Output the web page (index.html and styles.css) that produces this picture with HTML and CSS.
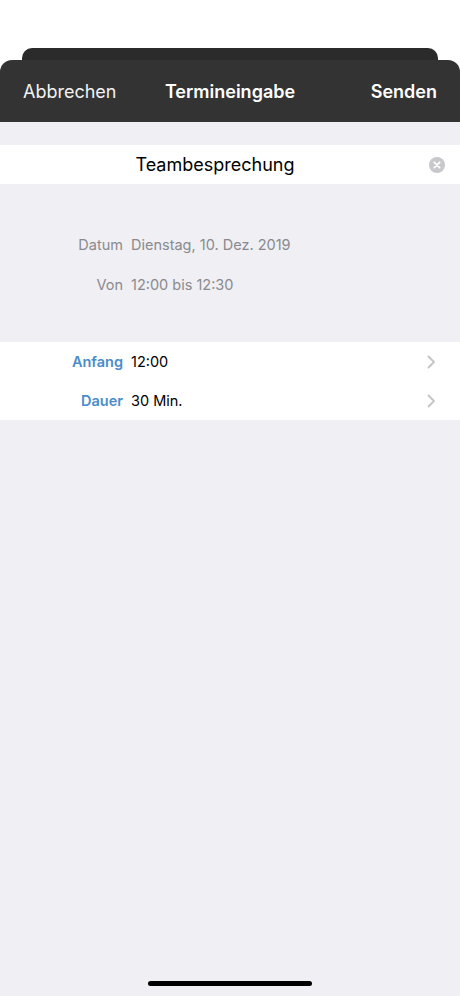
FILE: index.html
```html
<!DOCTYPE html>
<html lang="de">
<head>
<meta charset="utf-8">
<link rel="stylesheet" href="styles.css">
</head>
<body>
<div class="screen">
  <div class="back-card"></div>
  <div class="sheet">
    <header class="navbar">
      <span class="nav-btn">Abbrechen</span>
      <span class="nav-title">Termineingabe</span>
      <span class="nav-btn nav-send">Senden</span>
    </header>
    <main class="content">
      <div class="title-field">
        <span class="title-text">Teambesprechung</span>
        <svg class="clear-icon" width="16" height="16" viewBox="0 0 16 16"><circle cx="8" cy="8" r="8" fill="#c7c7cc"/><path d="M5.3 5.3 L10.7 10.7 M10.7 5.3 L5.3 10.7" stroke="#fff" stroke-width="1.8" stroke-linecap="round"/></svg>
      </div>
      <div class="info">
        <div class="info-row"><span class="info-label">Datum</span><span class="info-value">Dienstag, 10. Dez. 2019</span></div>
        <div class="info-row"><span class="info-label">Von</span><span class="info-value">12:00 bis 12:30</span></div>
      </div>
      <div class="group">
        <div class="row"><span class="row-label">Anfang</span><span class="row-value">12:00</span><svg class="chev" width="9" height="14" viewBox="0 0 9 14"><path d="M1.5 1.5 L7 7 L1.5 12.5" fill="none" stroke="#c4c4c7" stroke-width="1.8" stroke-linecap="round" stroke-linejoin="round"/></svg></div>
        <div class="row"><span class="row-label">Dauer</span><span class="row-value">30 Min.</span><svg class="chev" width="9" height="14" viewBox="0 0 9 14"><path d="M1.5 1.5 L7 7 L1.5 12.5" fill="none" stroke="#c4c4c7" stroke-width="1.8" stroke-linecap="round" stroke-linejoin="round"/></svg></div>
      </div>
      <div class="spacer"></div>
      <div class="home-bar"><span class="home-indicator"></span></div>
    </main>
  </div>
</div>
</body>
</html>
```

FILE: styles.css
```css
* { box-sizing: border-box; }
html, body { margin: 0; padding: 0; }
body {
  background: #ffffff;
  font-family: "Inter", "Liberation Sans", sans-serif;
}
.screen {
  width: 460px;
  height: 996px;
  display: flex;
  flex-direction: column;
  padding-top: 48px;
  overflow: hidden;
}
.back-card {
  height: 12px;
  margin: 0 22px;
  background: #2b2b2b;
  border-radius: 10px 10px 0 0;
  flex: none;
}
.sheet {
  flex: 1;
  display: flex;
  flex-direction: column;
  background: #efeff4;
  border-radius: 12px 12px 0 0;
  overflow: hidden;
}
.navbar {
  height: 62px;
  background: #333333;
  display: grid;
  grid-template-columns: 1fr auto 1fr;
  align-items: center;
  padding: 0 23px;
  color: #ffffff;
  font-size: 18px;
  flex: none;
}
.nav-btn { font-weight: 400; color: #f2f2f2; justify-self: start; }
.nav-title { font-weight: 600; }
.nav-send { font-weight: 600; color: #fff; justify-self: end; }
.content {
  flex: 1;
  display: flex;
  flex-direction: column;
  padding-top: 23px;
}
.title-field {
  height: 39px;
  background: #ffffff;
  display: flex;
  align-items: center;
  justify-content: center;
  padding-right: 30px;
  position: relative;
  font-size: 18px;
  color: #000;
}
.clear-icon {
  position: absolute;
  right: 15px;
  top: 12px;
}
.info {
  display: flex;
  flex-direction: column;
  gap: 20px;
  padding: 50px 0 48px 0;
}
.info-row {
  display: flex;
  height: 20px;
  align-items: center;
  font-size: 14.5px;
  color: #8a8a8e;
}
.info-label {
  width: 131px;
  text-align: right;
  padding-right: 8px;
}
.row-label, .info-label { flex: none; }
.group {
  background: #ffffff;
  display: flex;
  flex-direction: column;
}
.row {
  height: 39px;
  display: flex;
  align-items: center;
  font-size: 14.5px;
  padding-right: 24px;
}
.row-label {
  width: 131px;
  text-align: right;
  padding-right: 8px;
  color: #4a8dca;
  font-weight: 600;
}
.row-value { color: #000; flex: 1; }
.chev { flex: none; }
.spacer { flex: 1; }
.home-bar {
  height: 15px;
  display: flex;
  justify-content: center;
  align-items: flex-start;
}
.home-indicator {
  width: 164px;
  height: 5px;
  border-radius: 3px;
  background: #000;
}
```
